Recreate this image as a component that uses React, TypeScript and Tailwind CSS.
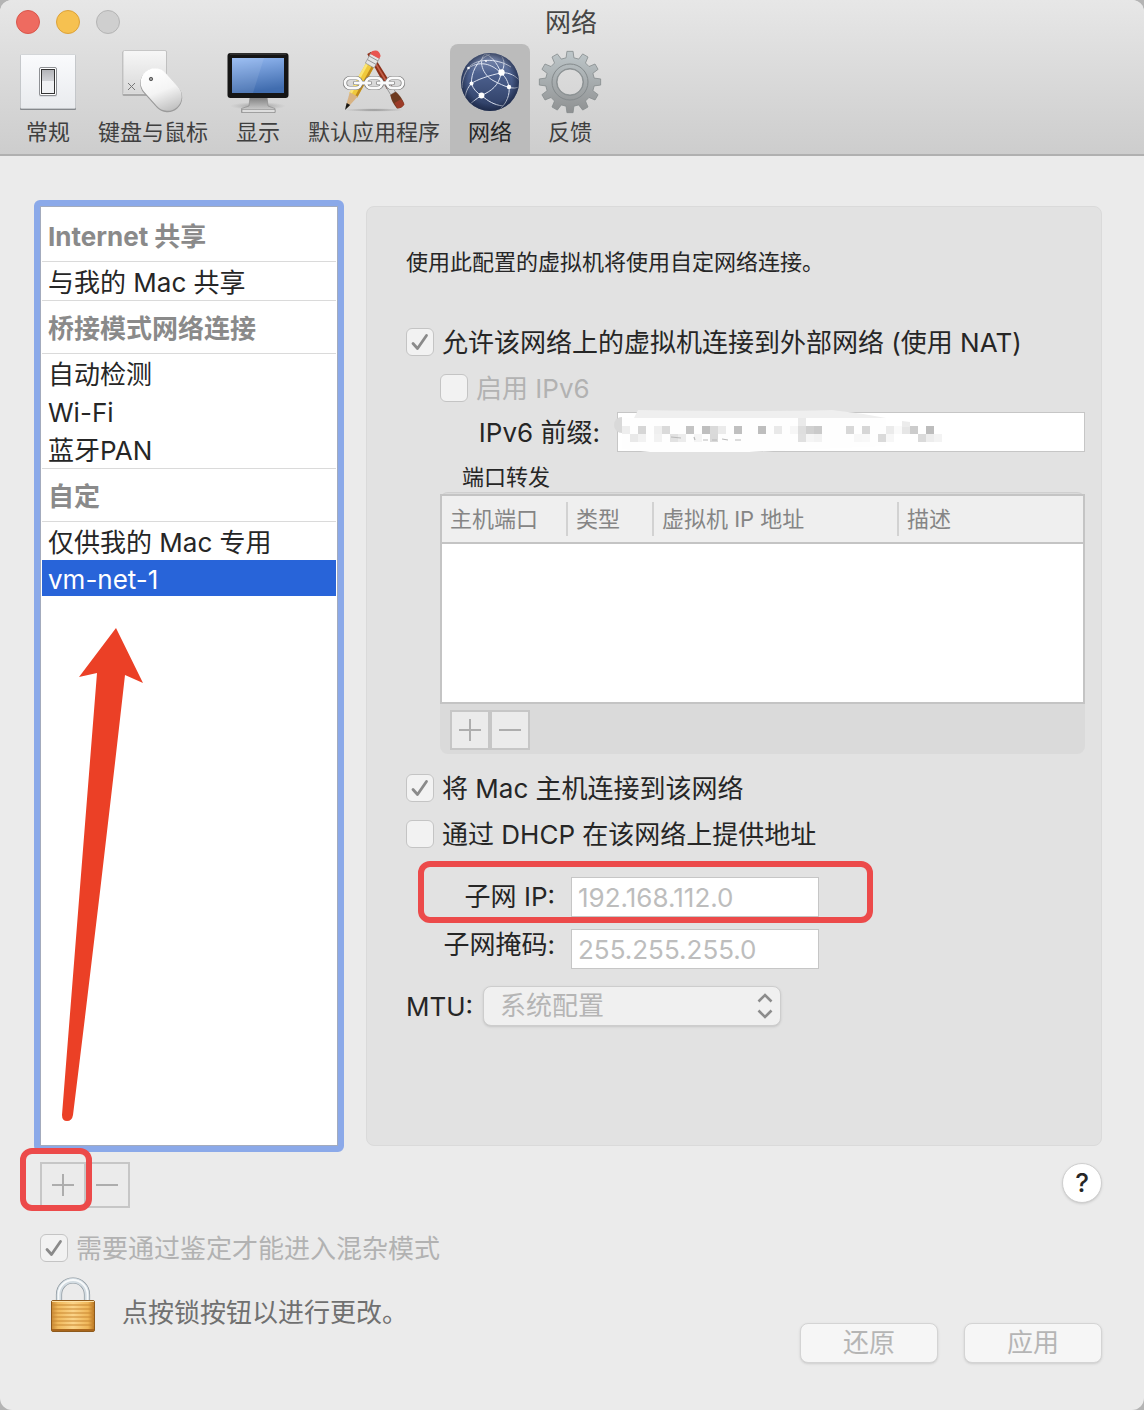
import { useState, type ReactNode } from "react";

interface CheckRowProps {
  id: string;
  label: string;
  defaultChecked?: boolean;
  disabled?: boolean;
  className?: string;
}

interface NetworkGroup {
  title: string;
  items: string[];
}

const GROUPS: NetworkGroup[] = [
  { title: "Internet 共享", items: ["与我的 Mac 共享"] },
  { title: "桥接模式网络连接", items: ["自动检测", "Wi-Fi", "蓝牙PAN"] },
  { title: "自定", items: ["仅供我的 Mac 专用", "vm-net-1"] },
];

// [column, row, colour] on an 8px grid
const MOSAIC: [number, number, string][] = [
  [0, 1, "#eeeeee"], [2, 1, "#d6d6d6"], [4, 1, "#efefef"], [5, 1, "#dadada"],
  [8, 1, "#c4c4c4"], [10, 1, "#bfbfbf"], [11, 1, "#dadada"], [12, 1, "#ebebeb"],
  [14, 1, "#c0c0c0"], [17, 1, "#bebebe"], [19, 1, "#e9e9e9"], [21, 1, "#f6f6f6"],
  [22, 0, "#eaeaea"], [22, 1, "#dedede"], [23, 1, "#d0d0d0"], [24, 1, "#cacaca"],
  [28, 1, "#d8d8d8"], [30, 1, "#d6d6d6"], [33, 1, "#ebebeb"], [35, 1, "#e6e6e6"],
  [36, 1, "#cccccc"], [38, 1, "#bdbdbd"], [34, 1, "#fafafa"], [1, 2, "#e9e9e9"],
  [2, 2, "#f2f2f2"], [4, 2, "#f2f2f2"], [6, 2, "#e2e2e2"], [7, 2, "#ececec"],
  [9, 2, "#f4f4f4"], [11, 2, "#d9d9d9"], [22, 2, "#e0e0e0"], [23, 2, "#f5f5f5"],
  [24, 2, "#f2f2f2"], [29, 2, "#f7f7f7"], [30, 2, "#f8f8f8"], [32, 2, "#dadada"],
  [33, 2, "#f7f7f7"], [37, 2, "#dadada"], [38, 2, "#ededed"], [39, 2, "#f3f3f3"],
];

function gearPath(cx: number, cy: number) {
  const points: string[] = [];
  for (let i = 0; i < 12; i++) {
    const a = (i * Math.PI) / 6;
    for (const [off, r] of [[-0.16, 24.5], [-0.1, 30.8], [0.1, 30.8], [0.16, 24.5]]) {
      const x = cx + r * Math.sin(a + off);
      const y = cy - r * Math.cos(a + off);
      points.push(`${x.toFixed(2)} ${y.toFixed(2)}`);
    }
  }
  return `M${points.join("L")}Z M${cx - 13} ${cy}a13 13 0 1 0 26 0a13 13 0 1 0 -26 0Z`;
}

function IconFrame({ children }: { children: ReactNode }) {
  return (
    <svg viewBox="6 0 60 68" className="h-[68px] w-[60px] overflow-visible" aria-hidden="true">
      {children}
    </svg>
  );
}

function SwitchIcon() {
  return (
    <IconFrame>
      <defs>
        <linearGradient id="sw-plate" x1="0" y1="0" x2="0" y2="1">
          <stop offset="0" stopColor="#fafbfd" />
          <stop offset="1" stopColor="#e9ebee" />
        </linearGradient>
        <linearGradient id="sw-top" x1="0" y1="0" x2="0" y2="1">
          <stop offset="0" stopColor="#b3b4b8" />
          <stop offset="1" stopColor="#d3d4d8" />
        </linearGradient>
      </defs>
      <rect x="8" y="9" width="56" height="55" rx="1" fill="#85888c" />
      <rect x="8.5" y="8.5" width="55" height="54" rx="1" fill="url(#sw-plate)" stroke="#c9cbcf" strokeWidth="0.7" />
      <rect x="27" y="21.5" width="18" height="29" rx="1.5" fill="#c6c8cc" />
      <rect x="27.5" y="21.5" width="17" height="28" rx="1.5" fill="#fff" stroke="#8e9094" />
      <rect x="29.5" y="23.5" width="13" height="24" fill="#f1f2f4" stroke="#333" />
      <rect x="30" y="24" width="12" height="11" fill="url(#sw-top)" />
    </IconFrame>
  );
}

function MouseIcon() {
  return (
    <IconFrame>
      <defs>
        <linearGradient id="key-face" x1="0" y1="0" x2="0" y2="1">
          <stop offset="0" stopColor="#f7f7f7" />
          <stop offset="1" stopColor="#d9d9d9" />
        </linearGradient>
        <linearGradient id="mouse-body" gradientUnits="userSpaceOnUse" x1="36" y1="24" x2="52" y2="66">
          <stop offset="0" stopColor="#ffffff" />
          <stop offset="0.5" stopColor="#f4f4f4" />
          <stop offset="1" stopColor="#bfbfbf" />
        </linearGradient>
      </defs>
      <rect x="5.5" y="5" width="44.5" height="45" rx="1.5" fill="#a9a9a9" />
      <rect x="6" y="4.5" width="43.5" height="42.5" rx="1.5" fill="url(#key-face)" stroke="#bdbdbd" strokeWidth="0.8" />
      <path d="M6 47.2h43.5" stroke="#efefef" strokeWidth="1" />
      <path d="M11 37l7 7M18 37l-7 7" stroke="#777" strokeWidth="1" />
      <path d="M38 37.5L50.5 51.5" stroke="#9a9a9a" strokeWidth="29.5" strokeLinecap="round" />
      <path d="M38 36.5L50.5 50.5" stroke="url(#mouse-body)" strokeWidth="28.5" strokeLinecap="round" />
      <circle cx="34" cy="33" r="1.7" fill="#999" stroke="#444" strokeWidth="0.8" />
    </IconFrame>
  );
}

function DisplayIcon() {
  return (
    <IconFrame>
      <defs>
        <linearGradient id="screen" x1="0" y1="0" x2="0.2" y2="1">
          <stop offset="0" stopColor="#94b9f2" />
          <stop offset="1" stopColor="#416daf" />
        </linearGradient>
        <linearGradient id="stand" x1="0" y1="0" x2="0" y2="1">
          <stop offset="0" stopColor="#7d7d7d" />
          <stop offset="1" stopColor="#dcdcdc" />
        </linearGradient>
        <radialGradient id="stand-shadow">
          <stop offset="0" stopColor="#777" stopOpacity="0.7" />
          <stop offset="1" stopColor="#999" stopOpacity="0" />
        </radialGradient>
      </defs>
      <ellipse cx="36" cy="60" rx="28" ry="4" fill="url(#stand-shadow)" />
      <path d="M28 51h17l1 9 7 2.5v4H19.5v-4L27 60Z" fill="url(#stand)" stroke="#8d8d8d" strokeWidth="0.7" />
      <path d="M20 63.5h33v3H20Z" fill="#dedede" stroke="#8a8a8a" strokeWidth="0.6" />
      <rect x="5.5" y="7" width="61" height="45" rx="3" fill="#151515" />
      <path d="M8 8h56" stroke="#484848" strokeWidth="1" />
      <rect x="10" y="12" width="52" height="35" fill="url(#screen)" />
      <path d="M10 12h32L31 47H10Z" fill="#fff" opacity="0.09" />
    </IconFrame>
  );
}

function AppsIcon() {
  return (
    <IconFrame>
      <defs>
        <radialGradient id="apps-shadow">
          <stop offset="0" stopColor="#777" stopOpacity="0.8" />
          <stop offset="1" stopColor="#999" stopOpacity="0" />
        </radialGradient>
      </defs>
      <ellipse cx="36" cy="64" rx="30" ry="1.8" fill="url(#apps-shadow)" />
      {/* brush */}
      <g transform="translate(31 7) rotate(-30.5)">
        <path d="M-2 0h4.500l1 40h-6.500Z" fill="#8c2f18" />
        <path d="M-0.500 1h1.500l0.500 38h-2Z" fill="#c4604a" />
        <rect x="-2.5" y="35" width="5.5" height="12" fill="#d8d8d8" stroke="#777" strokeWidth="0.6" />
        <path d="M-3 47h6.500q2.500 7 1 15q-4 2.500 -8.500 0q-1.500 -8 1 -15Z" fill="#6d3a20" />
        <path d="M-3.500 56h8v6q-4 2 -8 0Z" fill="#9c3b28" />
      </g>
      {/* pencil */}
      <g transform="translate(39.5 5.5) rotate(29)">
        <path d="M-4.500 15h9v35h-9Z" fill="#f0c93c" />
        <path d="M-4.500 15h2.500v35h-2.500Z" fill="#fae577" />
        <path d="M2 15h2.500v35H2Z" fill="#c08a1c" />
        <path d="M-4.500 49h9L1 64h-2Z" fill="#d8b384" />
        <path d="M-2 60h4L0 67Z" fill="#161616" />
        <rect x="-5" y="5" width="10" height="11" fill="#e4e4e4" stroke="#888" strokeWidth="0.6" />
        <path d="M-5 8h10M-5 12h10" stroke="#8b8b8b" strokeWidth="0.8" />
        <path d="M-5 5.500v-3q5 -6 10 0v3Z" fill="#e85550" />
      </g>
      {/* chain */}
      <g fill="none" stroke="#777" strokeWidth="4.2">
        <rect x="7" y="32" width="16" height="10" rx="5" />
        <rect x="28" y="32" width="16" height="10" rx="5" />
        <rect x="49" y="32" width="16" height="10" rx="5" />
        <path d="M17 37h15M40 37h15" strokeLinecap="round" />
      </g>
      <g fill="none" stroke="#fafafa" strokeWidth="2.8">
        <rect x="7" y="32" width="16" height="10" rx="5" />
        <rect x="28" y="32" width="16" height="10" rx="5" />
        <rect x="49" y="32" width="16" height="10" rx="5" />
        <path d="M17 37h15M40 37h15" strokeLinecap="round" />
      </g>
    </IconFrame>
  );
}

function GlobeIcon() {
  return (
    <IconFrame>
      <defs>
        <linearGradient id="globe" x1="0" y1="0" x2="0" y2="1">
          <stop offset="0" stopColor="#8794b5" />
          <stop offset="0.35" stopColor="#4d618f" />
          <stop offset="1" stopColor="#2c3c62" />
        </linearGradient>
        <radialGradient id="globe-edge">
          <stop offset="0.75" stopColor="#16213d" stopOpacity="0" />
          <stop offset="1" stopColor="#16213d" stopOpacity="0.65" />
        </radialGradient>
        <clipPath id="globe-clip">
          <circle cx="36" cy="36" r="28.5" />
        </clipPath>
      </defs>
      <circle cx="36" cy="36" r="29" fill="url(#globe)" />
      <g clipPath="url(#globe-clip)" fill="none" stroke="#dfe5f2" strokeWidth="1">
        <path d="M47 27C36 29 22 34 17.5 37.5C14 41 10 48 12 54" />
        <path d="M47 27C43 16 36 9 31 8C24 14 28 29 40 35C50 40 60 45 66 40" />
        <path d="M47 27C40 20 28 13 14.5 22C10 28 8 36 8 42" />
        <path d="M47 27C45 40 37 45 27.5 49.5C22 53 17 57 14 60" />
        <path d="M47 27C52 31 54 36 55 41C56 48 53 57 46 63" />
        <path d="M47 27C52 26 60 28 65 34M47 27C51 20 51 15 47 9" />
        <path d="M17.5 37.5C17 28 22 14 36 8M17.5 37.5C19 43 23 47 27.5 49.5C34 55 40 59 49 60" />
        <path d="M14.5 22C20 13 42 11 57 21" />
      </g>
      <circle cx="36" cy="36" r="29" fill="url(#globe-edge)" />
      <g fill="#fff">
        <circle cx="47.5" cy="26.5" r="3.2" />
        <circle cx="27.5" cy="49.5" r="2.9" />
        <circle cx="55" cy="41" r="2.2" />
        <circle cx="17.5" cy="37.5" r="2" />
        <circle cx="14.5" cy="22" r="1.3" />
        <circle cx="32" cy="15" r="0.9" />
      </g>
    </IconFrame>
  );
}

function GearIcon() {
  return (
    <IconFrame>
      <defs>
        <linearGradient id="gear" x1="0" y1="0" x2="0" y2="1">
          <stop offset="0" stopColor="#bec7ca" />
          <stop offset="1" stopColor="#8f9192" />
        </linearGradient>
      </defs>
      <path d={gearPath(36, 36)} fill="url(#gear)" fillRule="evenodd" stroke="#858b8d" strokeWidth="0.8" strokeLinejoin="round" />
      <circle cx="36" cy="36" r="18" fill="none" stroke="#848a8c" strokeWidth="1" />
      <circle cx="36" cy="36" r="13.5" fill="none" stroke="#8b9193" strokeWidth="1" />
    </IconFrame>
  );
}

function LockIcon() {
  return (
    <svg viewBox="0 0 46 56" className="h-14 w-[46px]" aria-hidden="true">
      <defs>
        <linearGradient id="lock-body" x1="0" y1="0" x2="1" y2="0">
          <stop offset="0" stopColor="#c98a35" />
          <stop offset="0.15" stopColor="#f0b95c" />
          <stop offset="0.5" stopColor="#fbd489" />
          <stop offset="0.85" stopColor="#efb658" />
          <stop offset="1" stopColor="#b8741f" />
        </linearGradient>
      </defs>
      <path d="M9 25V17.500a14 14 0 0 1 28 0V25" fill="none" stroke="#8b959c" strokeWidth="6.200" />
      <path d="M9 25V17.500a14 14 0 0 1 28 0V25" fill="none" stroke="#d3dce2" strokeWidth="4.800" />
      <path d="M8.500 25V17.500a14.500 14.500 0 0 1 29 0V25" fill="none" stroke="#f8fafb" strokeWidth="1.800" />
      <rect x="1.5" y="23.5" width="43" height="31" rx="1.5" fill="url(#lock-body)" stroke="#8e5a1c" />
      <path d="M2 24.500h42" stroke="#fde0a4" strokeWidth="1" />
      <path d="M2 28h42M2 32h42M2 36h42M2 40h42M2 44h42M2 48h42" stroke="#c98832" strokeWidth="1.200" />
      <path d="M2 53h42" stroke="#a9661c" strokeWidth="2" />
    </svg>
  );
}

const TABS = [
  { label: "常规", icon: <SwitchIcon /> },
  { label: "键盘与鼠标", icon: <MouseIcon /> },
  { label: "显示", icon: <DisplayIcon /> },
  { label: "默认应用程序", icon: <AppsIcon /> },
  { label: "网络", icon: <GlobeIcon /> },
  { label: "反馈", icon: <GearIcon /> },
];

function CheckRow({ id, label, defaultChecked, disabled, className = "" }: CheckRowProps) {
  return (
    <div className={`flex h-7 items-center gap-2 ${className}`}>
      <span className="grid size-7 shrink-0">
        <input
          id={id}
          type="checkbox"
          defaultChecked={defaultChecked}
          disabled={disabled}
          className="peer col-start-1 row-start-1 size-7 appearance-none rounded-md border border-[#c4c4c4] bg-[#f2f2f2]"
        />
        <svg
          viewBox="0 0 28 28"
          className="pointer-events-none col-start-1 row-start-1 hidden size-7 peer-checked:block"
          aria-hidden="true"
        >
          <path d="M7 15.500l4.500 5L20.500 7.500" fill="none" stroke="#8a8a8a" strokeWidth="2.800" strokeLinecap="round" strokeLinejoin="round" />
        </svg>
      </span>
      <label htmlFor={id} className={`pt-0.5 whitespace-nowrap ${disabled ? "text-[#b2b2b2]" : ""}`}>
        {label}
      </label>
    </div>
  );
}

function PlusMinus({ large = false }: { large?: boolean }) {
  const size = large ? "h-[46px] w-[46px]" : "size-10";
  const btn = "grid place-items-center border-2 border-[#c6c6c6] bg-[#ebebeb] text-[#adadad]";
  return (
    <div className="flex">
      <button type="button" aria-label="添加" className={`${btn} ${size}`}>
        <svg viewBox="0 0 22 22" className="size-[22px]">
          <path d="M0 11h22M11 0v22" stroke="currentColor" strokeWidth="2" />
        </svg>
      </button>
      <button type="button" aria-label="移除" className={`${btn} ${size} ${large ? "-ml-0.5" : ""}`}>
        <svg viewBox="0 0 22 22" className="size-[22px]">
          <path d="M0 11h22" stroke="currentColor" strokeWidth="2" />
        </svg>
      </button>
    </div>
  );
}

function Sidebar() {
  const [selected, setSelected] = useState("vm-net-1");

  return (
    <nav className="relative w-[310px] shrink-0 rounded-md border-[6px] border-[#8ba9e9] bg-[#8ba9e9]">
      <div className="h-full border border-[#a3abbd] bg-white px-px pt-px">
        {GROUPS.map((group, i) => (
          <section key={group.title}>
            <h2
              className={`flex h-[54px] items-center border-y border-b-[#dadada] px-1.5 pt-1 font-bold text-[#8a8a8a] ${
                i === 0 ? "border-t-transparent" : "border-t-[#dadada]"
              }`}
            >
              {group.title}
            </h2>
            {group.items.map((item) => (
              <button
                key={item}
                type="button"
                onClick={() => setSelected(item)}
                className={`flex w-full items-center px-1.5 pt-1 ${
                  item === selected ? "h-9 bg-[#2864d9] text-white" : "h-[38px]"
                }`}
              >
                {item}
              </button>
            ))}
          </section>
        ))}
      </div>
      <svg
        viewBox="0 0 84 496"
        className="pointer-events-none absolute top-[421px] left-5 h-[496px] w-[84px]"
        aria-hidden="true"
      >
        <path d="M56 1L83 56L65 48Q40 270 13 488Q12 494 7 494Q2 494 2 488Q20 260 37 46L19 50Z" fill="#eb4026" />
      </svg>
    </nav>
  );
}

function PortTable() {
  const cell = "block h-[34px] truncate border-r-2 border-[#d2d2d2] pl-2 leading-[34px]";
  return (
    <div className="mr-4 ml-[34px] rounded-lg border-t border-[#cfcfcf] bg-[#dadada]">
      <div className="mt-px h-[210px] border-2 border-[#c4c4c4] bg-white">
        <table className="w-full table-fixed border-collapse text-left text-[22px]">
          <thead>
            <tr className="h-[47px] border-b-2 border-[#c4c4c4] bg-[#efefef] text-[#858585]">
              <th scope="col" className="w-[126px] p-0 font-normal"><span className={cell}>主机端口</span></th>
              <th scope="col" className="w-[86px] p-0 font-normal"><span className={cell}>类型</span></th>
              <th scope="col" className="w-[245px] p-0 font-normal"><span className={cell}>虚拟机 IP 地址</span></th>
              <th scope="col" className="p-0 font-normal"><span className="block pl-2 leading-[34px]">描述</span></th>
            </tr>
          </thead>
          <tbody />
        </table>
      </div>
      <div className="px-2.5 pt-1.5 pb-1">
        <PlusMinus />
      </div>
    </div>
  );
}

function NetworkPanel() {
  const field = "h-10 border border-[#c6c6c6] bg-white px-1.5 outline-none";
  return (
    <form className="min-w-0 flex-1 self-stretch rounded-lg border border-[#dadada] bg-[#e2e2e2] pl-[39px]">
      <p className="mt-[39px] text-[22px] leading-8">使用此配置的虚拟机将使用自定网络连接。</p>

      <CheckRow id="nat" label="允许该网络上的虚拟机连接到外部网络 (使用 NAT)" defaultChecked className="mt-[50px]" />
      <CheckRow id="ipv6" label="启用 IPv6" disabled className="mt-[18px] ml-[34px]" />

      <div className="mt-[10px] mr-4 flex items-center">
        <label htmlFor="prefix" className="w-[194px] pt-0.5 text-right">IPv6 前缀:</label>
        <div className="relative ml-[17px] flex-1">
          <input id="prefix" type="text" className={`${field} block w-full`} />
          <svg
            viewBox="0 0 350 54"
            className="pointer-events-none absolute -top-2 -left-[7px] h-[54px] w-[350px]"
            aria-hidden="true"
          >
            <path d="M24 14L28 6Q150 8 222 6Q250 9 276 14Z" fill="#efefef" />
            <path d="M12 13A8 8 0 0 0 12 29Z" fill="#d9d9d9" />
            <path d="M12 14H276V42L139 48H40L12 45Z" fill="#fefefe" />
            {MOSAIC.map(([col, row, fill]) => (
              <rect key={`${col}-${row}`} x={12 + col * 8} y={14 + row * 8} width="8" height="8" fill={fill} />
            ))}
            <path d="M292 17l8 1v5h-8Z" fill="#ececec" />
            <path d="M61 33l10 1M84 33l1 3M93 36h5M102 36h5M112 35l6 1M125 36h6" stroke="#bababa" strokeWidth="1.200" />
          </svg>
        </div>
      </div>

      <p className="mt-[10px] ml-14 text-[22px] leading-[30px]">端口转发</p>
      <PortTable />

      <CheckRow id="host" label="将 Mac 主机连接到该网络" defaultChecked className="mt-5" />
      <CheckRow id="dhcp" label="通过 DHCP 在该网络上提供地址" className="mt-[18px]" />

      <div className="relative mt-[29px] flex items-center">
        <label htmlFor="subnet" className="w-[149px] text-right">子网 IP:</label>
        <input id="subnet" type="text" defaultValue="192.168.112.0" disabled className={`${field} ml-4 w-[248px] text-[#bdbdbd]`} />
        <span className="pointer-events-none absolute -top-4 left-3 h-[62px] w-[455px] rounded-xl border-[6px] border-[#ec4a4a]" />
      </div>
      <div className="mt-3 flex items-start">
        <label htmlFor="mask" className="w-[149px] text-right">子网掩码:</label>
        <input id="mask" type="text" defaultValue="255.255.255.0" disabled className={`${field} ml-4 w-[248px] text-[#bdbdbd]`} />
      </div>
      <div className="mt-[17px] flex items-center gap-2.5">
        <label htmlFor="mtu" className="pt-0.5">MTU:</label>
        <div className="relative">
          <select
            id="mtu"
            disabled
            className="block h-10 w-[298px] appearance-none rounded-lg border border-[#cdcdcd] bg-[#f0f0f0] px-4 text-[#b5b5b5] opacity-100 shadow-sm"
          >
            <option>系统配置</option>
          </select>
          <svg viewBox="0 0 16 26" className="pointer-events-none absolute top-[7px] right-2 h-[26px] w-4" aria-hidden="true">
            <path d="M1.500 8.500L8 2l6.500 6.500M1.500 17.500L8 24l6.500-6.500" fill="none" stroke="#8c8c8c" strokeWidth="2.600" />
          </svg>
        </div>
      </div>
    </form>
  );
}

export default function App() {
  const [tab, setTab] = useState("网络");
  const pushBtn =
    "h-10 w-[138px] rounded-lg border border-[#d4d4d4] bg-[#f6f6f6] text-[#b5b5b5] shadow-sm";

  return (
    <div className="bg-[#b4b4b4] font-['Inter','Noto_Sans_CJK_SC',sans-serif] text-[26px] leading-8 text-[#262626]">
      <div className="flex min-h-screen flex-col overflow-hidden rounded-xl bg-[#ebebeb]">
        <header className="border-b-2 border-[#b0b0b0] bg-gradient-to-b from-[#e7e7e7] to-[#cdcdcd]">
          <div className="relative flex h-11 items-center justify-center">
            <div className="absolute left-4 flex gap-4">
              <button type="button" aria-label="关闭" className="size-6 rounded-full border border-[#d9564b] bg-[#ee6b60]" />
              <button type="button" aria-label="最小化" className="size-6 rounded-full border border-[#dca23a] bg-[#f6c150]" />
              <button type="button" aria-label="缩放" disabled className="size-6 rounded-full border border-[#b4b4b4] bg-[#cfcfcf]" />
            </div>
            <h1 className="pt-0.5 pr-0.5 text-[#464646]">网络</h1>
          </div>
          <div className="flex pl-2 text-[22px] leading-9 text-[#3f3f3f]">
            {TABS.map((t) => (
              <button
                key={t.label}
                type="button"
                onClick={() => setTab(t.label)}
                className={`flex h-[110px] min-w-20 flex-col items-center rounded-t-lg px-2.5 pt-0.5 whitespace-nowrap ${
                  t.label === tab ? "bg-[#bbbbbb] text-[#262626]" : ""
                }`}
              >
                {t.icon}
                {t.label}
              </button>
            ))}
          </div>
        </header>

        <main className="flex flex-1 gap-[22px] pt-11 pr-[42px] pl-[34px]">
          <Sidebar />
          <div className="flex min-w-0 flex-1 py-1.5">
            <NetworkPanel />
          </div>
        </main>

        <footer className="pt-[10px] pr-[42px] pb-[47px] pl-10">
          <div className="flex items-center justify-between">
            <div className="relative">
              <PlusMinus large />
              <span className="pointer-events-none absolute -top-3.5 -left-5 h-[63px] w-[72px] rounded-xl border-[6px] border-[#ec4a4a]" />
            </div>
            <button type="button" className="mb-1 size-10 rounded-full border border-[#cfcfcf] bg-white font-medium shadow-sm" aria-label="帮助">
              ?
            </button>
          </div>
          <CheckRow id="promiscuous" label="需要通过鉴定才能进入混杂模式" defaultChecked disabled className="mt-[26px]" />
          <div className="mt-[15px] flex items-end justify-between">
            <div className="mb-[30px] flex items-center gap-[26px] pl-[10px]">
              <LockIcon />
              <p className="mt-4 text-[#707070]">点按锁按钮以进行更改。</p>
            </div>
            <div className="flex gap-[26px]">
              <button type="button" disabled className={pushBtn}>还原</button>
              <button type="button" disabled className={pushBtn}>应用</button>
            </div>
          </div>
        </footer>
      </div>
    </div>
  );
}
